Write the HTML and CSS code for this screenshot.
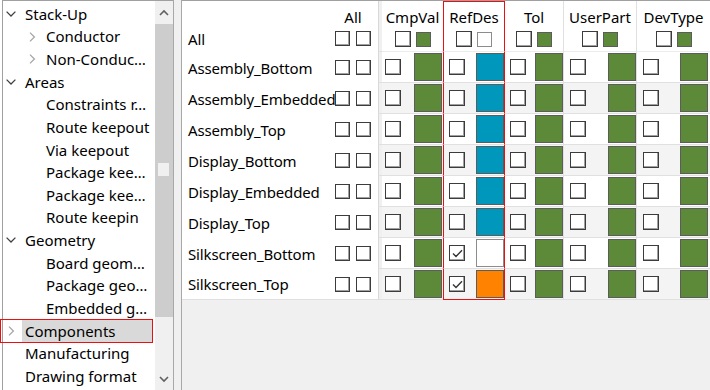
FILE: index.html
```html
<!DOCTYPE html>
<html lang="en">
<head>
    <meta charset="UTF-8">
    <meta name="viewport" content="width=device-width, initial-scale=1.0">
    <title>Color Dialog</title>
    <link rel="stylesheet" href="styles.css">
</head>
<body>
    <div class="tree-pane">
        <div class="tree">
            <div class="item open"><span class="arrow"><svg width="10" height="10" viewBox="0 0 10 10"><path d="M0.6 2.6 L5 7 L9.4 2.6"/></svg></span><span class="label">Stack-Up</span></div>
            <div class="item sub closed"><span class="arrow"><svg width="10" height="10" viewBox="0 0 10 10"><path d="M3 0.6 L7.4 5 L3 9.4"/></svg></span><span class="label">Conductor</span></div>
            <div class="item sub closed"><span class="arrow"><svg width="10" height="10" viewBox="0 0 10 10"><path d="M3 0.6 L7.4 5 L3 9.4"/></svg></span><span class="label">Non-Conduc…</span></div>
            <div class="item open"><span class="arrow"><svg width="10" height="10" viewBox="0 0 10 10"><path d="M0.6 2.6 L5 7 L9.4 2.6"/></svg></span><span class="label">Areas</span></div>
            <div class="item sub"><span class="arrow"></span><span class="label">Constraints r…</span></div>
            <div class="item sub"><span class="arrow"></span><span class="label">Route keepout</span></div>
            <div class="item sub"><span class="arrow"></span><span class="label">Via keepout</span></div>
            <div class="item sub"><span class="arrow"></span><span class="label">Package kee…</span></div>
            <div class="item sub"><span class="arrow"></span><span class="label">Package kee…</span></div>
            <div class="item sub"><span class="arrow"></span><span class="label">Route keepin</span></div>
            <div class="item open"><span class="arrow"><svg width="10" height="10" viewBox="0 0 10 10"><path d="M0.6 2.6 L5 7 L9.4 2.6"/></svg></span><span class="label">Geometry</span></div>
            <div class="item sub"><span class="arrow"></span><span class="label">Board geom…</span></div>
            <div class="item sub"><span class="arrow"></span><span class="label">Package geo…</span></div>
            <div class="item sub"><span class="arrow"></span><span class="label">Embedded g…</span></div>
            <div class="item closed selected marked"><span class="arrow"><svg width="10" height="10" viewBox="0 0 10 10"><path d="M3 0.6 L7.4 5 L3 9.4"/></svg></span><span class="label">Components</span></div>
            <div class="item"><span class="arrow"></span><span class="label">Manufacturing</span></div>
            <div class="item"><span class="arrow"></span><span class="label">Drawing format</span></div>
        </div>
        <div class="scrollbar">
            <div class="scroll-btn"><svg width="10" height="10" viewBox="0 0 10 10"><path d="M1 7 L5 3 L9 7"/></svg></div>
            <div class="thumb"><span class="grip"></span></div>
            <div class="track"></div>
            <div class="scroll-btn"><svg width="10" height="10" viewBox="0 0 10 10"><path d="M1 3 L5 7 L9 3"/></svg></div>
        </div>
    </div>

    <div class="splitter"></div>

    <div class="grid-pane">
        <div class="grid-row head">
            <div class="name-cell name-head">
                <span class="name all-name">All</span>
                <div class="all-col">
                    <span class="col-title">All</span>
                    <span class="pair"><span class="box sm"></span><span class="box sm"></span></span>
                </div>
            </div>
            <div class="gap-cell"></div>
            <div class="cell cmpval head-cell"><span class="col-title">CmpVal</span><span class="pair"><span class="box"></span><span class="swatch sm green"></span></span></div>
            <div class="cell refdes top head-cell"><span class="col-title">RefDes</span><span class="pair"><span class="box"></span><span class="swatch sm white"></span></span></div>
            <div class="cell tol head-cell"><span class="col-title">Tol</span><span class="pair"><span class="box"></span><span class="swatch sm green"></span></span></div>
            <div class="cell userpart head-cell"><span class="col-title">UserPart</span><span class="pair"><span class="box"></span><span class="swatch sm green"></span></span></div>
            <div class="cell devtype head-cell"><span class="col-title">DevType</span><span class="pair"><span class="box"></span><span class="swatch sm green"></span></span></div>
        </div>

        <div class="rows">
            <div class="grid-row">
                <div class="name-cell"><span class="name">Assembly_Bottom</span><span class="pair"><span class="box sm"></span><span class="box sm"></span></span></div>
                <div class="gap-cell"></div>
                <div class="cell cmpval"><span class="box"></span><span class="swatch green"></span></div>
                <div class="cell refdes"><span class="box"></span><span class="swatch blue"></span></div>
                <div class="cell tol"><span class="box"></span><span class="swatch green"></span></div>
                <div class="cell userpart"><span class="box"></span><span class="swatch green"></span></div>
                <div class="cell devtype"><span class="box"></span><span class="swatch green"></span></div>
            </div>
            <div class="grid-row">
                <div class="name-cell"><span class="name">Assembly_Embedded</span><span class="pair"><span class="box sm"></span><span class="box sm"></span></span></div>
                <div class="gap-cell"></div>
                <div class="cell cmpval"><span class="box"></span><span class="swatch green"></span></div>
                <div class="cell refdes"><span class="box"></span><span class="swatch blue"></span></div>
                <div class="cell tol"><span class="box"></span><span class="swatch green"></span></div>
                <div class="cell userpart"><span class="box"></span><span class="swatch green"></span></div>
                <div class="cell devtype"><span class="box"></span><span class="swatch green"></span></div>
            </div>
            <div class="grid-row">
                <div class="name-cell"><span class="name">Assembly_Top</span><span class="pair"><span class="box sm"></span><span class="box sm"></span></span></div>
                <div class="gap-cell"></div>
                <div class="cell cmpval"><span class="box"></span><span class="swatch green"></span></div>
                <div class="cell refdes"><span class="box"></span><span class="swatch blue"></span></div>
                <div class="cell tol"><span class="box"></span><span class="swatch green"></span></div>
                <div class="cell userpart"><span class="box"></span><span class="swatch green"></span></div>
                <div class="cell devtype"><span class="box"></span><span class="swatch green"></span></div>
            </div>
            <div class="grid-row">
                <div class="name-cell"><span class="name">Display_Bottom</span><span class="pair"><span class="box sm"></span><span class="box sm"></span></span></div>
                <div class="gap-cell"></div>
                <div class="cell cmpval"><span class="box"></span><span class="swatch green"></span></div>
                <div class="cell refdes"><span class="box"></span><span class="swatch blue"></span></div>
                <div class="cell tol"><span class="box"></span><span class="swatch green"></span></div>
                <div class="cell userpart"><span class="box"></span><span class="swatch green"></span></div>
                <div class="cell devtype"><span class="box"></span><span class="swatch green"></span></div>
            </div>
            <div class="grid-row">
                <div class="name-cell"><span class="name">Display_Embedded</span><span class="pair"><span class="box sm"></span><span class="box sm"></span></span></div>
                <div class="gap-cell"></div>
                <div class="cell cmpval"><span class="box"></span><span class="swatch green"></span></div>
                <div class="cell refdes"><span class="box"></span><span class="swatch blue"></span></div>
                <div class="cell tol"><span class="box"></span><span class="swatch green"></span></div>
                <div class="cell userpart"><span class="box"></span><span class="swatch green"></span></div>
                <div class="cell devtype"><span class="box"></span><span class="swatch green"></span></div>
            </div>
            <div class="grid-row">
                <div class="name-cell"><span class="name">Display_Top</span><span class="pair"><span class="box sm"></span><span class="box sm"></span></span></div>
                <div class="gap-cell"></div>
                <div class="cell cmpval"><span class="box"></span><span class="swatch green"></span></div>
                <div class="cell refdes"><span class="box"></span><span class="swatch blue"></span></div>
                <div class="cell tol"><span class="box"></span><span class="swatch green"></span></div>
                <div class="cell userpart"><span class="box"></span><span class="swatch green"></span></div>
                <div class="cell devtype"><span class="box"></span><span class="swatch green"></span></div>
            </div>
            <div class="grid-row">
                <div class="name-cell"><span class="name">Silkscreen_Bottom</span><span class="pair"><span class="box sm"></span><span class="box sm"></span></span></div>
                <div class="gap-cell"></div>
                <div class="cell cmpval"><span class="box"></span><span class="swatch green"></span></div>
                <div class="cell refdes"><span class="box checked"><svg width="11" height="9" viewBox="0 0 11 9"><path d="M1 4.5 L4 7.5 L10 1.2"/></svg></span><span class="swatch white"></span></div>
                <div class="cell tol"><span class="box"></span><span class="swatch green"></span></div>
                <div class="cell userpart"><span class="box"></span><span class="swatch green"></span></div>
                <div class="cell devtype"><span class="box"></span><span class="swatch green"></span></div>
            </div>
            <div class="grid-row last">
                <div class="name-cell"><span class="name">Silkscreen_Top</span><span class="pair"><span class="box sm"></span><span class="box sm"></span></span></div>
                <div class="gap-cell"></div>
                <div class="cell cmpval"><span class="box"></span><span class="swatch green"></span></div>
                <div class="cell refdes"><span class="box checked"><svg width="11" height="9" viewBox="0 0 11 9"><path d="M1 4.5 L4 7.5 L10 1.2"/></svg></span><span class="swatch orange"></span></div>
                <div class="cell tol"><span class="box"></span><span class="swatch green"></span></div>
                <div class="cell userpart"><span class="box"></span><span class="swatch green"></span></div>
                <div class="cell devtype"><span class="box"></span><span class="swatch green"></span></div>
            </div>
        </div>
    </div>
</body>
</html>
```

FILE: styles.css
```css
* {
    box-sizing: border-box;
}

body {
    margin: 0;
    width: 710px;
    height: 390px;
    overflow: hidden;
    display: flex;
    font-family: "Noto Sans", "Open Sans", sans-serif;
    font-size: 15px;
    color: #000;
    background-color: #fff;
}

/* left tree */

.tree-pane {
    width: 171px;
    margin-left: 2px;
    border-left: 1px solid #a0a0a0;
    border-top: 1px solid #a0a0a0;
    display: flex;
}

.tree {
    flex: 1;
    padding-top: 1.7px;
}

.item {
    display: flex;
    align-items: center;
    height: 22.65px;
    padding-left: 3px;
    white-space: nowrap;
}

.item.sub {
    padding-left: 24px;
}

.arrow {
    width: 10px;
    height: 10px;
    margin-right: 6px;
    flex-shrink: 0;
}

.arrow svg {
    display: block;
    fill: none;
    stroke-width: 1.3;
}

.item.open .arrow svg {
    stroke: #404040;
}

.item.closed .arrow svg {
    stroke: #a6a6a6;
}

.label {
    flex: 1;
    height: 100%;
    line-height: 22px;
    padding-left: 3px;
    margin-right: 3px;
}

.item.selected .label {
    background-color: #d9d9d9;
}

.item.marked {
    position: relative;
}

.item.marked::after {
    content: "";
    position: absolute;
    left: -3px;
    right: 2px;
    top: -1px;
    bottom: -1px;
    border: 1px solid #e81010;
}

.scrollbar {
    width: 18px;
    background-color: #f0f0f0;
    display: flex;
    flex-direction: column;
}

.scroll-btn {
    height: 23px;
    display: flex;
    align-items: center;
    justify-content: center;
}

.scroll-btn svg {
    fill: none;
    stroke: #606060;
    stroke-width: 1.6;
}

.thumb {
    height: 293px;
    background-color: #cdcdcd;
    padding-top: 139px;
    padding-left: 3px;
}

.grip {
    display: block;
    width: 11px;
    height: 13px;
    background-color: #f0f0f0;
}

.track {
    flex: 1;
}

.splitter {
    width: 9px;
    border-left: 1px solid #a8a8a8;
    border-right: 1px solid #a8a8a8;
    background-color: #f0f0f0;
}

/* right grid */

.grid-pane {
    flex: 1;
    border-top: 1px solid #a0a0a0;
    background-color: #f0f0f0;
}

.grid-row {
    display: grid;
    grid-template-columns: 196px 4px 61px 62px 59px 73px 73px;
    height: 31px;
}

.grid-row.head {
    height: 51px;
}

.name-cell {
    display: flex;
    align-items: center;
    padding: 0 7px 0 6px;
    background-color: #fff;
    white-space: nowrap;
}

.grid-row.last .name-cell {
    border-bottom: 1px solid #e0e0e0;
}

.name {
    line-height: 20px;
    letter-spacing: -0.15px;
}

.name-cell > .pair {
    margin-left: auto;
}

.name-head {
    align-items: flex-start;
    justify-content: space-between;
}

.all-name {
    margin-top: 28px;
}

.all-col {
    display: flex;
    flex-direction: column;
    align-items: center;
    padding-top: 6px;
}

.col-title {
    line-height: 20px;
    white-space: nowrap;
}

.pair {
    display: flex;
    align-items: center;
    gap: 6px;
    flex-shrink: 0;
}

.all-col .pair {
    margin-top: 4px;
}

.gap-cell {
    background-color: #f0f0f0;
    border-left: 1px solid #d8d8d8;
    border-bottom: 1px solid #e0e0e0;
}

.cell {
    display: flex;
    align-items: center;
    justify-content: space-between;
    background-color: #fff;
    border-bottom: 1px solid #e0e0e0;
}

.rows .grid-row:nth-child(even) .cell {
    background-color: #f4f4f4;
}

.cmpval {
    padding: 0 1px 0 3px;
}

.refdes {
    padding-left: 5px;
    border-left: 1px solid #e81010;
    border-right: 1px solid #e81010;
}

.grid-row.last .refdes {
    border-bottom-color: #e81010;
}

.tol {
    padding-left: 5px;
    border-right: 1px solid #e0e0e0;
}

.userpart {
    padding-left: 6px;
    border-right: 1px solid #e0e0e0;
}

.devtype {
    padding: 0 2px 0 6px;
}

/* column headers, after the cell paddings so they win */

.cell.head-cell {
    flex-direction: column;
    justify-content: flex-start;
    padding: 6px 0 0 0;
    border-bottom-color: #ececec;
}

.cell.head-cell.top {
    border-top: 1px solid #e81010;
    padding-top: 5px;
}

.head-cell .pair {
    gap: 5px;
    margin-top: 4px;
}

/* checkboxes and colour swatches */

.box {
    display: flex;
    align-items: center;
    justify-content: center;
    width: 16px;
    height: 16px;
    background-color: #fff;
    border: 1px solid #3c3c3c;
    box-shadow: inset -1px -1px 0 #a0a0a0;
    flex-shrink: 0;
}

.box.sm {
    width: 15px;
    height: 15px;
}

.box svg {
    fill: none;
    stroke: #333;
    stroke-width: 1.4;
}

.swatch {
    width: 28px;
    height: 28px;
    border: 1px solid #5c5c5c;
    flex-shrink: 0;
}

.swatch.sm {
    width: 15px;
    height: 15px;
}

.green {
    background-color: #5c8a38;
}

.blue {
    background-color: #0097bd;
}

.orange {
    background-color: #ff8300;
}

.white {
    background-color: #fff;
    border-color: #8c8c8c;
}
```
